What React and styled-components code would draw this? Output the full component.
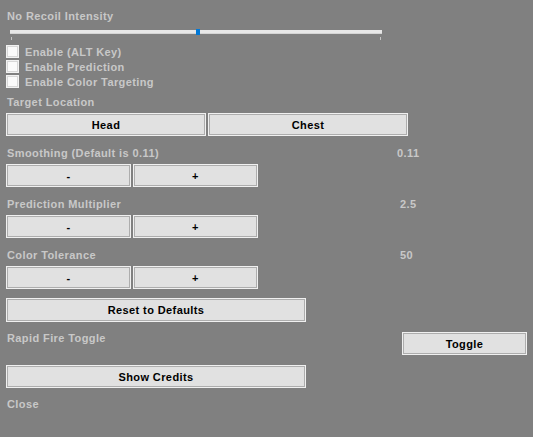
import React, { useState } from "react"
import styled, { createGlobalStyle } from "styled-components"

const GlobalStyle = createGlobalStyle`
    html, body {
        margin: 0;
        padding: 0;
        background: #808080;
    }
    body {
        font-family: "Liberation Sans", Arial, sans-serif;
        font-size: 11px;
        font-weight: bold;
        letter-spacing: 0.4px;
    }
`

const Panel = styled.div`
    width: 533px;
    height: 437px;
    box-sizing: border-box;
    padding: 10px 0 0 6px;
    display: flex;
    flex-direction: column;
    align-items: flex-start;
    color: #c8c8c8;
`
const Label = styled.div`
    line-height: 13px;
    height: 13px;
    margin-top: ${p => p.$top || 0}px;
    padding-left: 1px;
    white-space: nowrap;
`
const LabelRow = styled.div`
    display: flex;
    line-height: 13px;
    height: 13px;
    margin-top: ${p => p.$top || 0}px;
    padding-left: 1px;
    white-space: nowrap;
`
const RowName = styled.span`
    width: ${p => p.$w}px;
    flex-shrink: 0;
`
const SliderBox = styled.div`
    position: relative;
    width: 380px;
    height: 15px;
    margin-top: 6px;
`
const Track = styled.div`
    position: absolute;
    left: 4px;
    top: 1px;
    width: 372px;
    height: 3px;
    background: #e7e7e7;
    border-bottom: 1px solid #d4d4d4;
`
const Thumb = styled.div`
    position: absolute;
    top: 0;
    width: 4px;
    height: 6px;
    background: #0078d7;
`
const Tick = styled.div`
    position: absolute;
    top: 8px;
    width: 1px;
    height: 3px;
    background: #c4c4c4;
`
const CheckRow = styled.label`
    display: flex;
    align-items: center;
    height: 15px;
    gap: 6px;
    cursor: pointer;
`
const Box = styled.span`
    width: 13px;
    height: 13px;
    box-sizing: border-box;
    border: 1px solid #f2f2f2;
    background: #fbfbfb;
    box-shadow: inset 0 0 0 1px #d8d8d8;
    display: flex;
    align-items: center;
    justify-content: center;
    color: #000;
    font-size: 10px;
`
const ButtonRow = styled.div`
    display: flex;
    gap: 2px;
    margin-top: ${p => p.$top || 0}px;
`
const Btn = styled.button`
    width: ${p => p.$w}px;
    height: ${p => p.$h || 23}px;
    flex-shrink: 0;
    box-sizing: border-box;
    margin: 0;
    padding: 0;
    border: 1px solid #f0f0f0;
    box-shadow: inset 0 0 0 1px #adadad;
    background: #e1e1e1;
    color: #000;
    font-family: "Liberation Sans", Arial, sans-serif;
    font-size: 11px;
    font-weight: bold;
    letter-spacing: 0.4px;
    cursor: pointer;
`
const SplitRow = styled.div`
    display: flex;
    justify-content: space-between;
    align-items: flex-start;
    width: 521px;
    margin-top: ${p => p.$top || 0}px;
`

function Check({ text }) {
    const [on, setOn] = useState(false)
    return (
        <CheckRow onClick={() => setOn(!on)}>
            <Box>{on ? "✓" : ""}</Box>
            <span>{text}</span>
        </CheckRow>
    )
}

function Stepper({ top }) {
    return (
        <ButtonRow $top={top}>
            <Btn $w={125}>-</Btn>
            <Btn $w={125}>+</Btn>
        </ButtonRow>
    )
}

export default function App() {
    return (
        <>
            <GlobalStyle />
            <Panel>
                <Label>No Recoil Intensity</Label>
                <SliderBox>
                    <Track />
                    <Thumb style={{ left: 190 }} />
                    <Tick style={{ left: 5 }} />
                    <Tick style={{ left: 374 }} />
                </SliderBox>
                <Check text="Enable (ALT Key)" />
                <Check text="Enable Prediction" />
                <Check text="Enable Color Targeting" />
                <Label $top={7}>Target Location</Label>
                <ButtonRow $top={4}>
                    <Btn $w={200}>Head</Btn>
                    <Btn $w={200}>Chest</Btn>
                </ButtonRow>
                <LabelRow $top={11}>
                    <RowName $w={390}>Smoothing (Default is 0.11)</RowName>
                    <span>0.11</span>
                </LabelRow>
                <Stepper top={4} />
                <LabelRow $top={11}>
                    <RowName $w={393}>Prediction Multiplier</RowName>
                    <span>2.5</span>
                </LabelRow>
                <Stepper top={4} />
                <LabelRow $top={11}>
                    <RowName $w={393}>Color Tolerance</RowName>
                    <span>50</span>
                </LabelRow>
                <Stepper top={4} />
                <ButtonRow $top={9}>
                    <Btn $w={300} $h={24}>Reset to Defaults</Btn>
                </ButtonRow>
                <SplitRow $top={10}>
                    <Label>Rapid Fire Toggle</Label>
                    <Btn $w={125}>Toggle</Btn>
                </SplitRow>
                <ButtonRow $top={10}>
                    <Btn $w={300}>Show Credits</Btn>
                </ButtonRow>
                <Label $top={10}>Close</Label>
            </Panel>
        </>
    )
}
